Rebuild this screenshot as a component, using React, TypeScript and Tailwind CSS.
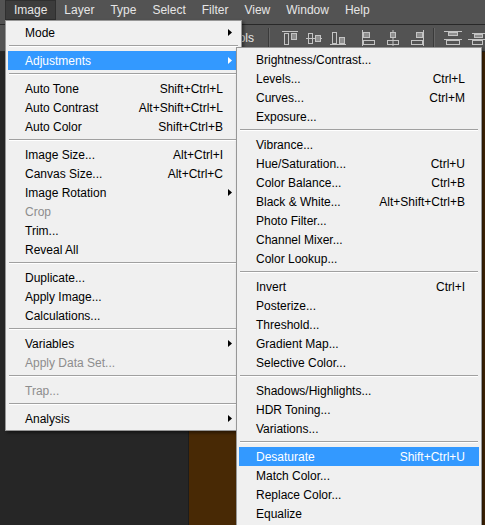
import React from "react";

type Entry =
  | { label: string; shortcut?: string; sub?: boolean; disabled?: boolean; active?: boolean }
  | "sep";

const imageMenu: Entry[] = [
  { label: "Mode", sub: true },
  "sep",
  { label: "Adjustments", sub: true, active: true },
  "sep",
  { label: "Auto Tone", shortcut: "Shift+Ctrl+L" },
  { label: "Auto Contrast", shortcut: "Alt+Shift+Ctrl+L" },
  { label: "Auto Color", shortcut: "Shift+Ctrl+B" },
  "sep",
  { label: "Image Size...", shortcut: "Alt+Ctrl+I" },
  { label: "Canvas Size...", shortcut: "Alt+Ctrl+C" },
  { label: "Image Rotation", sub: true },
  { label: "Crop", disabled: true },
  { label: "Trim..." },
  { label: "Reveal All" },
  "sep",
  { label: "Duplicate..." },
  { label: "Apply Image..." },
  { label: "Calculations..." },
  "sep",
  { label: "Variables", sub: true },
  { label: "Apply Data Set...", disabled: true },
  "sep",
  { label: "Trap...", disabled: true },
  "sep",
  { label: "Analysis", sub: true },
];

const adjustMenu: Entry[] = [
  { label: "Brightness/Contrast..." },
  { label: "Levels...", shortcut: "Ctrl+L" },
  { label: "Curves...", shortcut: "Ctrl+M" },
  { label: "Exposure..." },
  "sep",
  { label: "Vibrance..." },
  { label: "Hue/Saturation...", shortcut: "Ctrl+U" },
  { label: "Color Balance...", shortcut: "Ctrl+B" },
  { label: "Black & White...", shortcut: "Alt+Shift+Ctrl+B" },
  { label: "Photo Filter..." },
  { label: "Channel Mixer..." },
  { label: "Color Lookup..." },
  "sep",
  { label: "Invert", shortcut: "Ctrl+I" },
  { label: "Posterize..." },
  { label: "Threshold..." },
  { label: "Gradient Map..." },
  { label: "Selective Color..." },
  "sep",
  { label: "Shadows/Highlights..." },
  { label: "HDR Toning..." },
  { label: "Variations..." },
  "sep",
  { label: "Desaturate", shortcut: "Shift+Ctrl+U", active: true },
  { label: "Match Color..." },
  { label: "Replace Color..." },
  { label: "Equalize" },
];

const menuBar = ["Image", "Layer", "Type", "Select", "Filter", "View", "Window", "Help"];

const Arrow = ({ white }: { white?: boolean }) => (
  <svg width="4" height="7" viewBox="0 0 4 7" className="shrink-0">
    <polygon points="0,0 4,3.5 0,7" fill={white ? "#ffffff" : "#000000"} />
  </svg>
);

const Menu = ({ items, className, wide }: { items: Entry[]; className: string; wide?: boolean }) => (
  <div
    className={`absolute flex flex-col border border-[#979797] bg-[#f0f0f0] p-[2px] shadow-[2px_2px_3px_rgba(0,0,0,0.45)] ${className}`}
  >
    {items.map((it, i) =>
      it === "sep" ? (
        <div key={i} className="h-[9px] pt-[3px] px-px">
          <div className="h-px bg-[#a0a0a0]" />
          <div className="h-px bg-white" />
        </div>
      ) : (
        <div
          key={i}
          className={`flex h-[19px] items-center pl-[17px] ${wide ? "pr-[14px]" : "pr-[7px]"} ${
            it.active ? "bg-[#3399ff] text-white" : it.disabled ? "text-[#8d8d8d]" : "text-black"
          }`}
        >
          <span className="whitespace-nowrap">{it.label}</span>
          <span className="ml-auto" />
          {it.shortcut && (
            <span className={`whitespace-nowrap ${wide ? "" : "mr-[9px]"}`}>{it.shortcut}</span>
          )}
          {it.sub && <Arrow white={it.active} />}
        </div>
      )
    )}
  </div>
);

// align / distribute buttons in the options bar
const AlignIcon = ({ kind }: { kind: number }) => {
  const s = "#c4c4c4";
  const f = "#8e8e8e";
  const shapes: Record<number, React.ReactNode> = {
    0: (
      <>
        <line x1="0" y1="1.5" x2="16" y2="1.5" stroke={s} />
        <rect x="2.5" y="3.5" width="4" height="11" fill="none" stroke={s} />
        <rect x="9.5" y="3.5" width="5" height="6" fill={f} stroke={s} />
      </>
    ),
    1: (
      <>
        <line x1="0" y1="8.5" x2="16" y2="8.5" stroke={s} />
        <rect x="2.5" y="3.5" width="4" height="10" fill="none" stroke={s} />
        <rect x="9.5" y="5.5" width="5" height="6" fill={f} stroke={s} />
      </>
    ),
    2: (
      <>
        <line x1="0" y1="14.5" x2="16" y2="14.5" stroke={s} />
        <rect x="2.5" y="2.5" width="4" height="11" fill="none" stroke={s} />
        <rect x="9.5" y="7.5" width="5" height="6" fill={f} stroke={s} />
      </>
    ),
    3: (
      <>
        <line x1="1.5" y1="0" x2="1.5" y2="16" stroke={s} />
        <rect x="2.5" y="2.5" width="6" height="5" fill={f} stroke={s} />
        <rect x="2.5" y="10.5" width="11" height="4" fill="none" stroke={s} />
      </>
    ),
    4: (
      <>
        <line x1="8" y1="0" x2="8" y2="16" stroke={s} />
        <rect x="5.5" y="2.5" width="5" height="5" fill={f} stroke={s} />
        <rect x="2.5" y="10.5" width="11" height="4" fill="none" stroke={s} />
      </>
    ),
    5: (
      <>
        <line x1="14.5" y1="0" x2="14.5" y2="16" stroke={s} />
        <rect x="7.5" y="2.5" width="6" height="5" fill={f} stroke={s} />
        <rect x="2.5" y="10.5" width="11" height="4" fill="none" stroke={s} />
      </>
    ),
    6: (
      <>
        <line x1="0" y1="1.5" x2="18" y2="1.5" stroke={s} />
        <rect x="4.5" y="2.5" width="9" height="3" fill={f} stroke={s} />
        <line x1="0" y1="9.5" x2="18" y2="9.5" stroke={s} />
        <rect x="2.5" y="10.5" width="13" height="4" fill="none" stroke={s} />
      </>
    ),
    7: (
      <>
        <line x1="4" y1="3.5" x2="18" y2="3.5" stroke={s} />
        <rect x="6.5" y="4.5" width="8" height="3" fill={f} stroke={s} />
        <line x1="0" y1="9.5" x2="18" y2="9.5" stroke={s} />
        <rect x="4.5" y="10.5" width="10" height="4" fill="none" stroke={s} />
      </>
    ),
  };
  return (
    <svg width={kind >= 6 ? 18 : 16} height="16" viewBox={kind >= 6 ? "0 0 18 16" : "0 0 16 16"} className="shrink-0">
      {shapes[kind]}
    </svg>
  );
};

const VSep = () => (
  <div className="flex h-[20px] shrink-0">
    <div className="w-px bg-[#3a3a3a]" />
    <div className="w-px bg-[#666666]" />
  </div>
);

export default function App() {
  return (
    <div className="relative flex h-[525px] w-[485px] flex-col overflow-hidden bg-[#262626] font-['Liberation_Sans',Arial,sans-serif] text-[12px] leading-none">
      {/* menu bar */}
      <div className="flex h-[24px] shrink-0 items-start bg-[#535353] pl-[5px] text-[#e6e6e6]">
        {menuBar.map((m, i) => (
          <div
            key={m}
            className={`flex h-[20px] items-center px-2 ${
              i === 0 ? "border border-[#2f2f2f] bg-[#3c3c3c]" : ""
            }`}
          >
            {m}
          </div>
        ))}
      </div>
      <div className="h-px shrink-0 bg-[#282828]" />

      {/* options bar */}
      <div className="flex h-[26px] shrink-0 items-center bg-[#535353] text-[#e6e6e6]">
        <div className="flex w-[257px] shrink-0 items-center justify-end gap-1 pr-[3px] whitespace-nowrap">
          <span className="inline-block h-[12px] w-[12px] border border-[#999] bg-[#eee]" />
          <span>Show Transform Controls</span>
        </div>
        <div className="ml-[11px]">
          <VSep />
        </div>
        <div className="ml-[12px] flex items-center gap-[8px]">
          <AlignIcon kind={0} />
          <AlignIcon kind={1} />
          <AlignIcon kind={2} />
        </div>
        <div className="ml-[15px] flex items-center gap-[8px]">
          <AlignIcon kind={3} />
          <AlignIcon kind={4} />
          <AlignIcon kind={5} />
        </div>
        <div className="ml-[8px]">
          <VSep />
        </div>
        <div className="ml-[9px] flex items-center gap-[6px]">
          <AlignIcon kind={6} />
          <AlignIcon kind={7} />
        </div>
      </div>
      <div className="h-px shrink-0 bg-[#282828]" />

      {/* workspace */}
      <div className="flex flex-1">
        <div className="w-[189px] shrink-0 border-r border-[#1c1c1c] bg-[#262626]" />
        <div className="flex-1 bg-[#482905]" />
      </div>

      <Menu items={imageMenu} className="left-[5px] top-[20px] w-[237px]" />
      <Menu items={adjustMenu} className="left-[236px] top-[47px] w-[246px]" wide />
    </div>
  );
}
